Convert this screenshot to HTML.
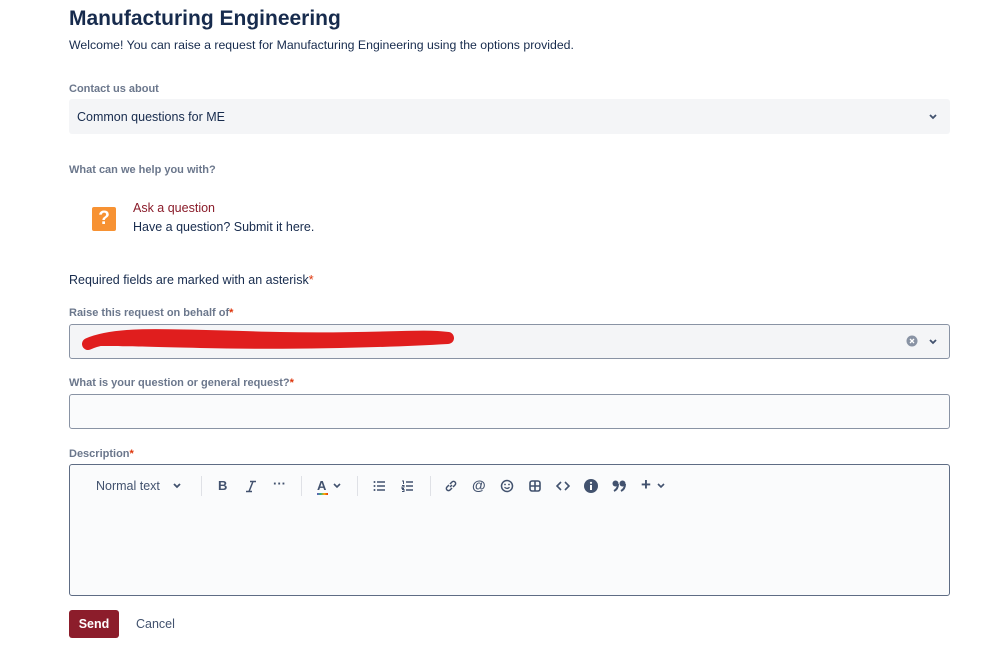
<!DOCTYPE html>
<html><head><meta charset="utf-8"><style>
body{margin:0;width:999px;height:667px;background:#fff;font-family:"Liberation Sans",sans-serif;color:#172b4d;position:relative;overflow:hidden}
.a{position:absolute;white-space:nowrap}
.lbl{font-size:11px;color:#6b778c;font-weight:bold}
.st{color:#de350b}
.box{position:absolute;left:69px;width:881px;box-sizing:border-box}
.tb{position:absolute;top:478px;font-size:13px;color:#42526e;font-weight:bold}
.sep{position:absolute;top:476px;width:1px;height:20px;background:#dfe1e6}
</style></head><body>
<div class="a" style="left:69px;top:7px;font-size:21px;font-weight:bold;color:#172b4d">Manufacturing Engineering</div>
<div class="a" style="left:69px;top:38px;font-size:12.3px">Welcome! You can raise a request for Manufacturing Engineering using the options provided.</div>
<div class="a lbl" style="left:69px;top:83px">Contact us about</div>
<div class="box" style="top:99px;height:35px;background:#f4f5f7;border-radius:3px"></div>
<div class="a" style="left:77px;top:110px;font-size:12.5px">Common questions for ME</div>
<svg class="a" style="left:928px;top:112px" width="10" height="10"><path d="M2 3l3 3 3-3" stroke="#42526e" stroke-width="1.8" fill="none"/></svg>
<div class="a lbl" style="left:69px;top:164px">What can we help you with?</div>
<div class="a" style="left:92px;top:207px;width:24px;height:24px;background:#f79233;border-radius:2px;color:#fff;font-weight:bold;font-size:19px;text-align:center;line-height:24px">?</div>
<div class="a" style="left:133px;top:201px;font-size:12.5px;color:#8a1c2a">Ask a question</div>
<div class="a" style="left:133px;top:220px;font-size:12.5px">Have a question? Submit it here.</div>
<div class="a" style="left:69px;top:273px;font-size:12.5px">Required fields are marked with an asterisk<span class="st">*</span></div>
<div class="a lbl" style="left:69px;top:307px">Raise this request on behalf of<span class="st">*</span></div>
<div class="box" style="top:324px;height:35px;background:#f4f5f7;border:1px solid #8993a4;border-radius:3px"></div>
<svg class="a" style="left:80px;top:326px" width="380" height="30"><path d="M10 20 C40 6 80 12 150 14 S300 14 365 12 L368 18 C300 22 200 24 120 22 S40 20 10 20Z" fill="#e01e1e"/><path d="M8 18 C40 4 100 10 200 12 S340 8 368 12" stroke="#e01e1e" stroke-width="12" fill="none" stroke-linecap="round"/></svg>
<svg class="a" style="left:906px;top:335px" width="12" height="12"><circle cx="6" cy="6" r="5.5" fill="#8993a4"/><path d="M4 4l4 4M8 4l-4 4" stroke="#fff" stroke-width="1.3"/></svg>
<svg class="a" style="left:928px;top:337px" width="10" height="10"><path d="M2 3l3 3 3-3" stroke="#42526e" stroke-width="1.8" fill="none"/></svg>
<div class="a lbl" style="left:69px;top:377px">What is your question or general request?<span class="st">*</span></div>
<div class="box" style="top:394px;height:35px;background:#fafbfc;border:1px solid #8993a4;border-radius:3px"></div>
<div class="a lbl" style="left:69px;top:448px">Description<span class="st">*</span></div>
<div class="box" style="top:464px;height:132px;background:#fafbfc;border:1px solid #5e6c84;border-radius:3px"></div>
<div class="a" style="left:96px;top:479px;font-size:12.5px;color:#42526e">Normal text</div>
<svg class="a" style="left:172px;top:481px" width="10" height="10"><path d="M2 3l3 3 3-3" stroke="#42526e" stroke-width="1.8" fill="none"/></svg>
<div class="sep" style="left:201px"></div>
<div class="tb" style="left:218px">B</div>
<svg class="a" style="left:245px;top:480px" width="12" height="13"><path d="M5 1.5h6M1 11.5h6M8 1.5L4 11.5" stroke="#42526e" stroke-width="1.5" fill="none"/></svg>
<div class="tb" style="left:273px;top:476px">···</div>
<div class="sep" style="left:301px"></div>
<div class="tb" style="left:317px">A</div>
<div class="a" style="left:317px;top:493px;width:11px;height:2px;background:linear-gradient(90deg,#6554c0,#36b37e,#ffab00,#de350b)"></div>
<svg class="a" style="left:332px;top:481px" width="10" height="10"><path d="M2 3l3 3 3-3" stroke="#42526e" stroke-width="1.6" fill="none"/></svg>
<div class="sep" style="left:357px"></div>
<svg class="a" style="left:373px;top:480px" width="13" height="12"><path d="M4 2h8M4 6h8M4 10h8" stroke="#42526e" stroke-width="1.5"/><circle cx="1.5" cy="2" r="1" fill="#42526e"/><circle cx="1.5" cy="6" r="1" fill="#42526e"/><circle cx="1.5" cy="10" r="1" fill="#42526e"/></svg>
<svg class="a" style="left:401px;top:480px" width="13" height="12"><path d="M5 2h7M5 6h7M5 10h7" stroke="#42526e" stroke-width="1.5"/><path d="M1 1h1.5v3M1 5.5h2v1.5h-2v1.5h2M1 9.5h2v2h-2" stroke="#42526e" stroke-width="1" fill="none"/></svg>
<div class="sep" style="left:430px"></div>
<svg class="a" style="left:444px;top:479px" width="14" height="14"><path d="M6 8l2-2M5 6l-2 2a2 2 0 0 0 3 3l2-2M9 8l2-2a2 2 0 0 0-3-3l-2 2" stroke="#42526e" stroke-width="1.5" fill="none"/></svg>
<div class="tb" style="left:472px;top:477px;font-size:14px">@</div>
<svg class="a" style="left:500px;top:479px" width="14" height="14"><circle cx="7" cy="7" r="5.5" stroke="#42526e" stroke-width="1.5" fill="none"/><path d="M4.5 8.2q2.5 2.5 5 0" stroke="#42526e" stroke-width="1.3" fill="none"/><circle cx="5" cy="5.5" r=".9" fill="#42526e"/><circle cx="9" cy="5.5" r=".9" fill="#42526e"/></svg>
<svg class="a" style="left:529px;top:480px" width="12" height="12"><rect x="1" y="1" width="10" height="10" rx="2" stroke="#42526e" stroke-width="1.6" fill="none"/><path d="M6 1v10M1 6h10" stroke="#42526e" stroke-width="1.6"/></svg>
<svg class="a" style="left:556px;top:480px" width="14" height="12"><path d="M5 2L1 6l4 4M9 2l4 4-4 4" stroke="#42526e" stroke-width="1.6" fill="none"/></svg>
<svg class="a" style="left:584px;top:479px" width="14" height="14"><circle cx="7" cy="7" r="7" fill="#42526e"/><path d="M7 6v5" stroke="#fff" stroke-width="2"/><circle cx="7" cy="3.8" r="1.1" fill="#fff"/></svg>
<svg class="a" style="left:612px;top:480px" width="15" height="12"><circle cx="3.5" cy="3.5" r="3" fill="#42526e"/><circle cx="10.5" cy="3.5" r="3" fill="#42526e"/><path d="M6 4q0 5-4 7M13 4q0 5-4 7" stroke="#42526e" stroke-width="2" fill="none"/></svg>
<div class="tb" style="left:641px;top:475px;font-size:17px">+</div>
<svg class="a" style="left:656px;top:481px" width="10" height="10"><path d="M2 3l3 3 3-3" stroke="#42526e" stroke-width="1.6" fill="none"/></svg>
<div class="a" style="left:69px;top:610px;width:50px;height:28px;background:#8c1d2b;border-radius:3px;color:#fff;font-weight:bold;font-size:12.5px;text-align:center;line-height:28px">Send</div>
<div class="a" style="left:136px;top:617px;font-size:12.5px;color:#42526e">Cancel</div>
</body></html>
